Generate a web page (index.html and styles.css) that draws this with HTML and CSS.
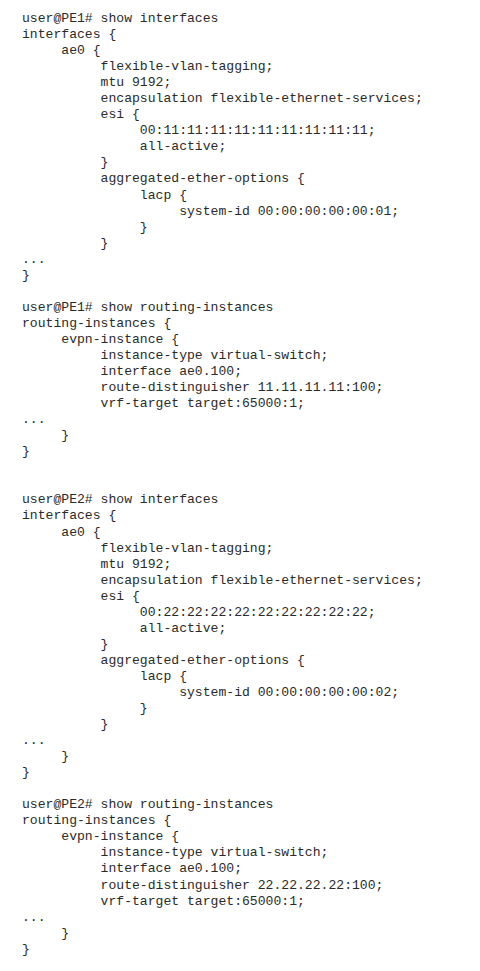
FILE: index.html
```html
<!DOCTYPE html>
<html>
<head>
<meta charset="utf-8">
<link rel="stylesheet" href="styles.css">
</head>
<body>
<pre class="listing">user@PE1# show interfaces
interfaces {
     ae0 {
          flexible-vlan-tagging;
          mtu 9192;
          encapsulation flexible-ethernet-services;
          esi {
               00:11:11:11:11:11:11:11:11:11;
               all-active;
          }
          aggregated-ether-options {
               lacp {
                    system-id 00:00:00:00:00:01;
               }
          }
...
}

user@PE1# show routing-instances
routing-instances {
     evpn-instance {
          instance-type virtual-switch;
          interface ae0.100;
          route-distinguisher 11.11.11.11:100;
          vrf-target target:65000:1;
...
     }
}


user@PE2# show interfaces
interfaces {
     ae0 {
          flexible-vlan-tagging;
          mtu 9192;
          encapsulation flexible-ethernet-services;
          esi {
               00:22:22:22:22:22:22:22:22:22;
               all-active;
          }
          aggregated-ether-options {
               lacp {
                    system-id 00:00:00:00:00:02;
               }
          }
...
     }
}

user@PE2# show routing-instances
routing-instances {
     evpn-instance {
          instance-type virtual-switch;
          interface ae0.100;
          route-distinguisher 22.22.22.22:100;
          vrf-target target:65000:1;
...
     }
}</pre>
</body>
</html>
```

FILE: styles.css
```css
html, body {
  margin: 0;
  padding: 0;
  background: #ffffff;
}

.listing {
  margin: 0;
  padding: 11px 0 0 22px;
  font-family: "Liberation Mono", "Courier New", monospace;
  font-size: 13.1px;
  line-height: 16.05px;
  color: #2a2a2a;
}
```
